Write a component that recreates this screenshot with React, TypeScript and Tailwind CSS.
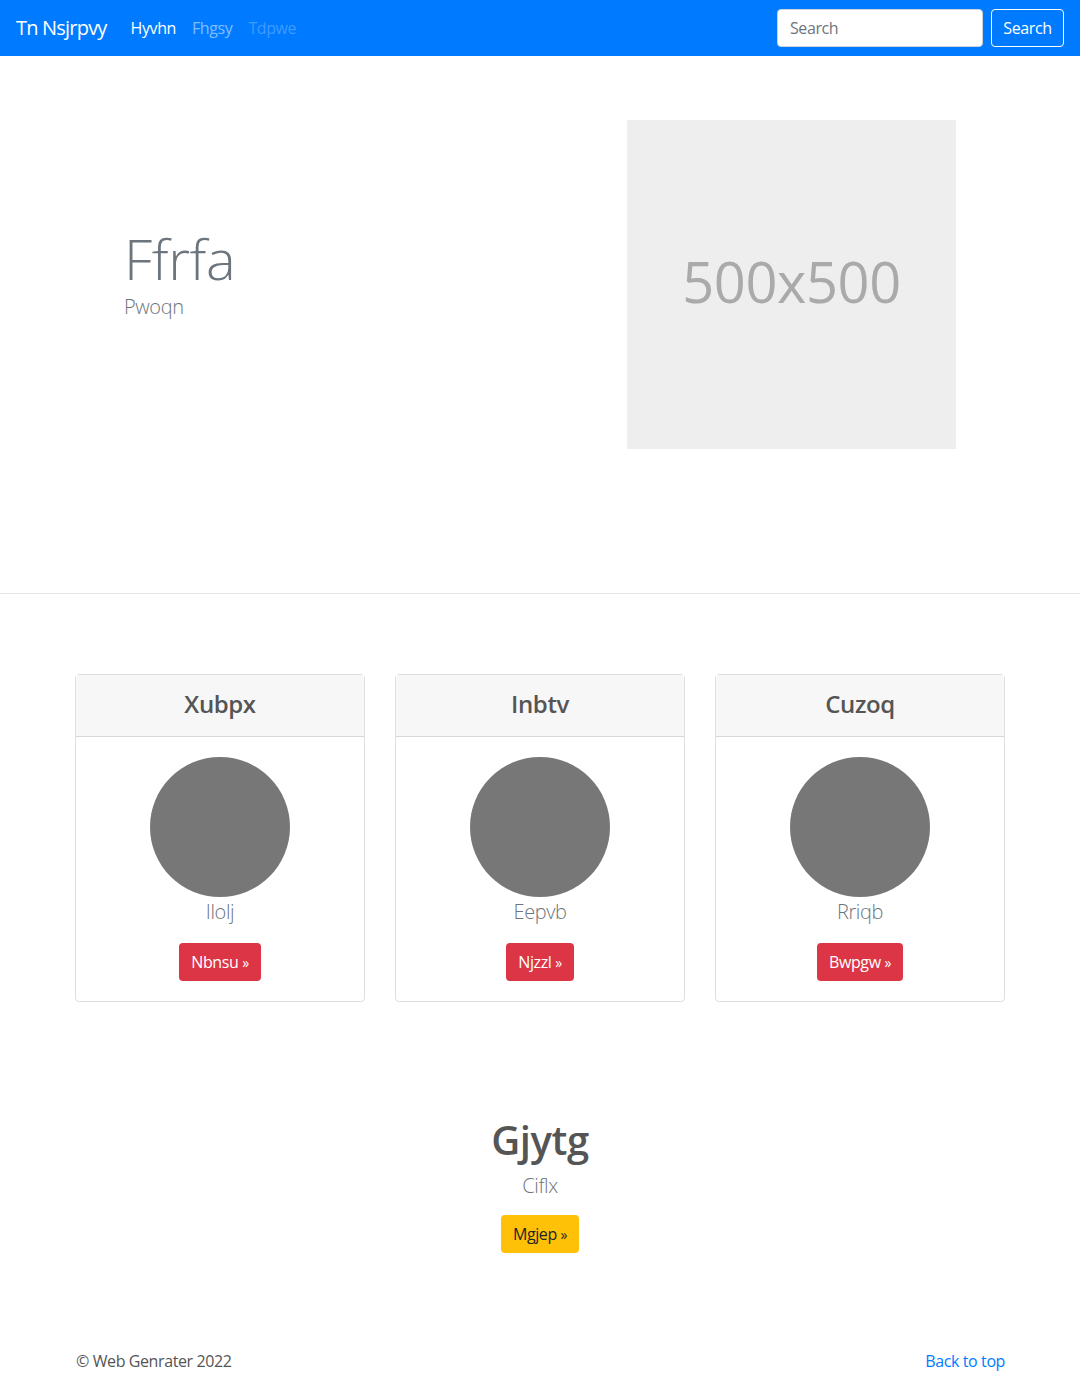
import { useState } from 'react';

const cards = [
    { title: 'Xubpx', label: 'Ilolj', action: 'Nbnsu' },
    { title: 'Inbtv', label: 'Eepvb', action: 'Njzzl' },
    { title: 'Cuzoq', label: 'Rriqb', action: 'Bwpgw' },
];

export default function App() {
    const [query, setQuery] = useState('');

    return (
        <div className="min-h-screen bg-white text-[#212529] font-['Open_Sans',sans-serif] tracking-[-0.025em]">
            {/* Navbar */}
            <header className="h-14 bg-[#007bff] px-4 flex items-center">
                <a href="#" className="text-xl text-white mr-4 leading-[30px] tracking-[-0.04em]">Tn Nsjrpvy</a>
                <nav className="flex items-center">
                    <a href="#" className="px-2 text-base text-white">Hyvhn</a>
                    <a href="#" className="px-2 text-base text-white/50">Fhgsy</a>
                    <span className="px-2 text-base text-white/25">Tdpwe</span>
                </nav>
                <form className="ml-auto flex items-center" onSubmit={(e) => e.preventDefault()}>
                    <input
                        value={query}
                        onChange={(e) => setQuery(e.target.value)}
                        placeholder="Search"
                        className="w-[206px] h-[38px] px-3 text-base bg-white border border-[#ced4da] rounded placeholder:text-[#6c757d] outline-none"
                    />
                    <button className="ml-2 h-[38px] w-[73px] text-base text-white border border-white rounded">Search</button>
                </form>
            </header>

            {/* Hero */}
            <section className="h-[538px] border-b border-[#e5e5e5]">
                <div className="w-[960px] mx-auto px-[15px] pt-16 flex items-center">
                    <div className="w-[450px] pl-[49px] -mt-[18px]">
                        <h1 className="text-[56px] font-light leading-[56px] text-[#6c757d] mb-[6px]">Ffrfa</h1>
                        <p className="text-xl font-light leading-[30px] text-[#6c757d]">Pwoqn</p>
                    </div>
                    <div className="ml-[102px] w-[329px] h-[329px] bg-[#eeeeee] flex items-center justify-center">
                        <span className="text-[56px] text-[#aaaaaa] -mt-2">500x500</span>
                    </div>
                </div>
            </section>

            {/* Cards */}
            <section className="pt-[80px]">
                <div className="w-[930px] mx-auto grid grid-cols-3 gap-[30px]">
                    {cards.map((card) => (
                        <div key={card.title} className="border border-black/[0.125] rounded text-center">
                            <div className="h-[62px] bg-[#f7f7f7] border-b border-black/[0.125] flex items-center justify-center pb-1">
                                <h4 className="text-2xl font-semibold text-[#555]">{card.title}</h4>
                            </div>
                            <div className="p-5">
                                <div className="w-[140px] h-[140px] rounded-full bg-[#777] mx-auto" />
                                <p className="text-xl font-light leading-[30px] text-[#6c757d] mb-4">{card.label}</p>
                                <button className="h-[38px] px-3 text-base text-white bg-[#dc3545] rounded">
                                    {card.action} <span className="text-sm">&raquo;</span>
                                </button>
                            </div>
                        </div>
                    ))}
                </div>
            </section>

            {/* Feature */}
            <section className="pt-[114px] text-center">
                <h2 className="text-[40px] font-semibold leading-[48px] text-[#555] mb-[7px]">Gjytg</h2>
                <p className="text-xl font-light leading-[30px] text-[#6c757d] mb-[14px]">Ciflx</p>
                <button className="h-[38px] px-3 text-base text-[#212529] bg-[#ffc107] rounded">
                    Mgjep <span className="text-sm">&raquo;</span>
                </button>
            </section>

            {/* Footer */}
            <footer className="w-[930px] mx-auto pt-[96px] pb-12 flex justify-between text-base leading-6">
                <p className="text-[#555] pl-px">&copy; Web Genrater 2022</p>
                <a href="#" className="text-[#007bff]">Back to top</a>
            </footer>
        </div>
    );
}
